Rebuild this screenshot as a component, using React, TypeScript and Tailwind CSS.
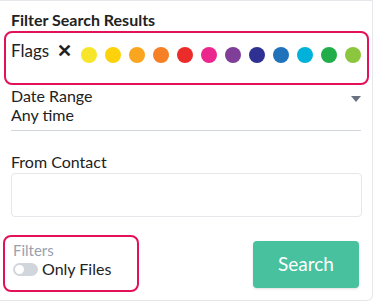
import { useState } from 'react'

const COLORES_FLAG = [
  '#f6e52a',
  '#fdd20a',
  '#f9a51f',
  '#f58025',
  '#ec2c2a',
  '#ec268f',
  '#7f3f98',
  '#2e3092',
  '#2073ba',
  '#00b2da',
  '#22ad4b',
  '#8cc63f',
]

export default function App() {
  const [soloArchivos, setSoloArchivos] = useState(false)

  return (
    <div className="w-[376px] h-[305px] bg-white font-['Lato',sans-serif] text-[#222]">
      <div className="w-[373px] h-[301px] border-r border-b border-t border-gray-200 rounded-br-md flex flex-col">
        <h2 className="pl-[11px] pt-[9px] text-[16px] font-bold leading-[20px]">Filter Search Results</h2>

        <div className="ml-[4px] mt-[1px] w-[365px] h-[54px] border-2 border-[#e2115a] rounded-lg flex items-start pl-[5px] pt-[7px]">
          <span className="text-[17px] leading-[22px]">Flags</span>
          <span className="ml-[8px] text-[18px] font-bold leading-[20px]">✕</span>
          <div className="ml-[9px] mt-[7px] flex gap-[8px]">
            {COLORES_FLAG.map((c) => (
              <span key={c} className="w-[16px] h-[16px] rounded-full" style={{ backgroundColor: c }} />
            ))}
          </div>
        </div>

        <div className="mx-[11px] mt-[1px] border-b border-gray-300 flex items-start">
          <div className="flex-1 text-[16px] leading-[19px]">
            <div>Date Range</div>
            <div className="pb-[6px]">Any time</div>
          </div>
          <span className="mt-[10px] w-0 h-0 border-l-[5px] border-r-[5px] border-t-[6px] border-l-transparent border-r-transparent border-t-gray-500" />
        </div>

        <label className="ml-[11px] mt-[21px] text-[16px] leading-[20px]">From Contact</label>
        <input type="text" className="ml-[11px] mt-[1px] w-[351px] h-[44px] border border-gray-200 rounded-sm" />

        <div className="mt-[18px] flex items-start">
          <div className="ml-[3px] w-[136px] h-[57px] border-2 border-[#e2115a] rounded-lg pl-[8px] pt-[4px]">
            <div className="text-[15px] leading-[18px] text-gray-400">Filters</div>
            <button
              type="button"
              onClick={() => setSoloArchivos(!soloArchivos)}
              className="flex items-center gap-[4px]"
            >
              <span className="w-[25px] h-[13px] rounded-full bg-gray-300 flex items-center px-[2px]">
                <span className="w-[9px] h-[9px] rounded-full bg-white" />
              </span>
              <span className="text-[16px] leading-[20px]">Only Files</span>
            </button>
          </div>
          <button
            type="button"
            className="ml-auto mr-[13px] mt-[6px] w-[106px] h-[47px] rounded bg-[#48c19f] text-white text-[19px] shadow-sm"
          >
            Search
          </button>
        </div>
      </div>
    </div>
  )
}
